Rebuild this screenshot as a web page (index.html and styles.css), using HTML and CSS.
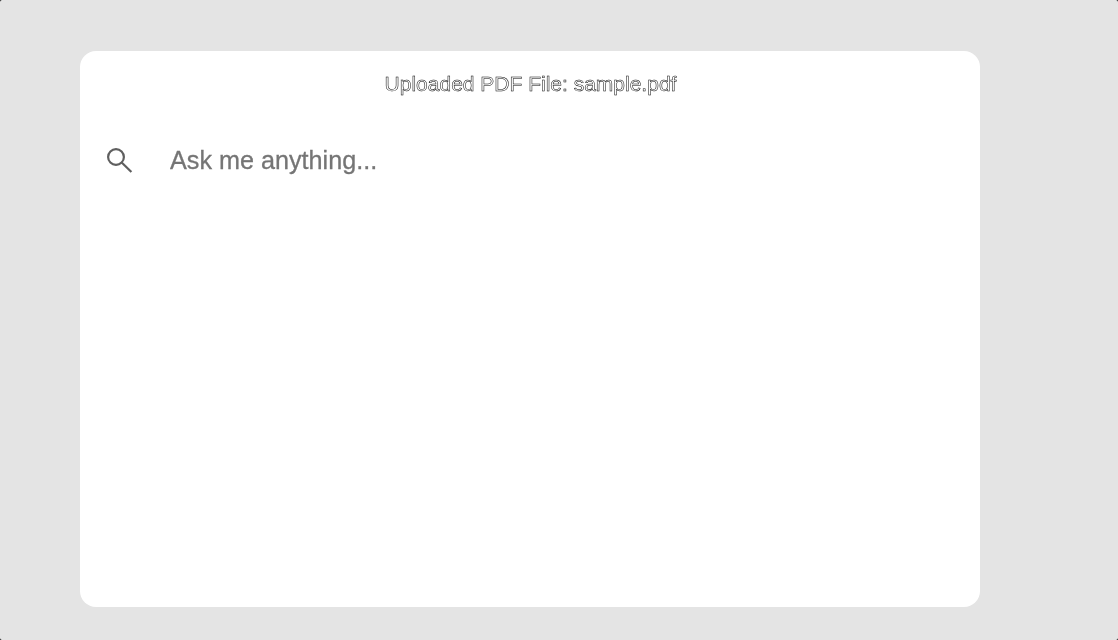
FILE: index.html
```html
<!DOCTYPE html>
<html lang="en">
<head>
<meta charset="utf-8">
<title>Ask a PDF</title>
<link rel="stylesheet" href="styles.css">
</head>
<body>
<div class="window">
<main class="card">
<h1 class="file-name">Uploaded PDF File: sample.pdf</h1>
<form class="search">
<svg class="search-icon" viewBox="0 0 28 28" aria-hidden="true"><circle cx="10" cy="10" r="7.9"/><path d="M15.4 15.2L25.4 25"/></svg>
<input class="search-input" type="text" placeholder="Ask me anything..." aria-label="Question">
</form>
</main>
</div>
</body>
</html>
```
FILE: styles.css
```css
html { background: #000; }
body { margin: 0; }
.window {
  box-sizing: border-box;
  height: 640px;
  padding: 51px 138px 33px 80px;
  background: #e4e4e4;
  border-radius: 2px;
}
.card {
  box-sizing: border-box;
  height: 556px;
  padding-top: 20px;
  background: #fff;
  border-radius: 16px;
  font-family: "Liberation Sans", Arial, sans-serif;
}
.file-name {
  margin: 0;
  padding-left: 1px;
  text-align: center;
  font-size: 21px;
  font-weight: 400;
  line-height: 26px;
  color: #fff;
  -webkit-text-stroke: 0.5px #000;
  will-change: transform;
}
.search {
  display: flex;
  align-items: center;
  margin-top: 40px;
  padding-left: 26px;
  height: 48px;
}
.search-icon {
  width: 28px;
  height: 28px;
  fill: none;
  stroke: #5f5f5f;
  stroke-width: 2.2;
}
.search-input {
  flex: 1;
  margin: 0 0 2px 36px;
  padding: 0;
  border: 0;
  outline: 0;
  background: none;
  font: 25.2px/32px "Liberation Sans", Arial, sans-serif;
  will-change: transform;
}
.search-input::placeholder {
  color: #757575;
  -webkit-text-stroke: 0.3px #757575;
}
```
